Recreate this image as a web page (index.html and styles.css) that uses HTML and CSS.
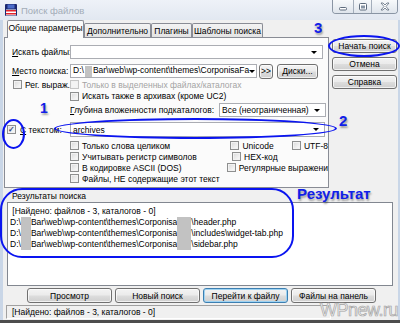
FILE: index.html
```html
<!DOCTYPE html>
<html lang="ru">
<head>
  <meta charset="UTF-8" />
  <title>Поиск файлов</title>
  <link rel="stylesheet" href="styles.css">
</head>
<body>

  <div class="window">

    <!-- TITLE BAR -->
    <div class="titlebar">
      <svg class="app-icon" width="12" height="12" viewBox="0 0 12 12">
        <rect x="0" y="0" width="12" height="12" rx="1" fill="#1b2870"/>
        <rect x="2.5" y="0.5" width="7" height="4" fill="#4a6ac8"/>
        <rect x="1" y="5.5" width="10" height="6" fill="#ffffff"/>
        <rect x="1" y="6" width="10" height="1.5" fill="#e3222b"/>
        <rect x="1" y="9" width="10" height="1.5" fill="#e3222b"/>
      </svg>
      <span class="title">Поиск файлов</span>
      <div class="controls">
        <div class="ctl ctl-min">
          <svg width="10" height="8" viewBox="0 0 10 8"><rect x="1.5" y="4.5" width="7" height="2.5" rx="1" fill="#fff" stroke="#5d6b7c"/></svg>
        </div>
        <div class="ctl ctl-max">
          <svg width="10" height="8" viewBox="0 0 10 8"><rect x="1.5" y="0.5" width="7" height="6.5" rx="1" fill="#fff" stroke="#5d6b7c"/><rect x="3" y="2.5" width="4" height="3" fill="#8794a4"/></svg>
        </div>
        <div class="ctl ctl-close">
          <svg width="12" height="9" viewBox="0 0 12 9"><path d="M2 1 L4 1 L6 3 L8 1 L10 1 L7 4.5 L10 8 L8 8 L6 6 L4 8 L2 8 L5 4.5 Z" fill="#fff" stroke="#5d6b7c" stroke-width="0.8" stroke-linejoin="round"/></svg>
        </div>
      </div>
    </div>

    <!-- CLIENT AREA -->
    <div class="client">

      <div class="top">
        <div class="tabs">
          <div class="tabstrip">
            <div class="tab active" style="width: 77px;">Общие параметры</div>
            <div class="tab" style="width: 67px;">Дополнительно</div>
            <div class="tab" style="width: 41px;">Плагины</div>
            <div class="tab" style="width: 71px;">Шаблоны поиска</div>
          </div>

          <div class="panel">
            <div class="row row-1">
              <div class="lbl"><span><u>И</u>скать файлы:</span></div>
              <div class="combo combo-files"><span class="arrow"></span></div>
            </div>

            <div class="row row-2">
              <div class="lbl"><span><u>М</u>есто поиска:</span></div>
              <div class="combo combo-place"><span>D:\<span class="redact redact-place"></span>Bar\web\wp-content\themes\CorponisaFa</span><span class="arrow"></span></div>
              <div class="btn btn-more">&gt;&gt;</div>
              <div class="btn btn-disks">Диски...</div>
            </div>

            <div class="row row-3">
              <div class="lbl lbl-check"><span class="cb"></span><span>Рег. выраж.</span></div>
              <div class="check disabled"><span class="cb"></span><span>Только в выделенных файлах/каталогах</span></div>
            </div>

            <div class="row row-4">
              <div class="lbl"></div>
              <div class="check"><span class="cb"></span><span>Искать также в архивах (кроме UC2)</span></div>
            </div>

            <div class="row row-5">
              <div class="lbl"></div>
              <div class="depth"><u>Г</u>лубина вложенности подкаталогов:</div>
              <div class="combo combo-depth"><span>Все (неограниченная)</span><span class="arrow"></span></div>
            </div>

            <div class="row row-6">
              <div class="lbl lbl-text"><span class="cb checked">&#10003;</span><span><u>С</u> текстом:</span></div>
              <div class="combo combo-text"><span>archives</span><span class="arrow"></span></div>
            </div>

            <div class="row row-opt">
              <div class="lbl"></div>
              <div class="check col-a"><span class="cb"></span><span>Только слова целиком</span></div>
              <div class="check col-b"><span class="cb"></span><span>Unicode</span></div>
              <div class="check"><span class="cb"></span><span>UTF-8</span></div>
            </div>
            <div class="row row-opt">
              <div class="lbl"></div>
              <div class="check col-a"><span class="cb"></span><span>Учитывать регистр символов</span></div>
              <div class="check col-b"><span class="cb"></span><span>HEX-код</span></div>
            </div>
            <div class="row row-opt">
              <div class="lbl"></div>
              <div class="check col-a"><span class="cb"></span><span>В кодировке ASCII (DOS)</span></div>
              <div class="check"><span class="cb"></span><span>Регулярные выражени</span></div>
            </div>
            <div class="row row-opt">
              <div class="lbl"></div>
              <div class="check"><span class="cb"></span><span>Файлы, НЕ содержащие этот текст</span></div>
            </div>
          </div>
        </div>

        <div class="side">
          <div class="btn">Начать поиск</div>
          <div class="btn">Отмена</div>
          <div class="btn">Справка</div>
        </div>
      </div>

      <div class="results-label">Результаты поиска</div>
      <div class="results-list">
        <div class="line">&nbsp;[Найдено: файлов - 3, каталогов - 0]</div>
        <div class="line">D:\<span class="redact r1"></span>Bar\web\wp-content\themes\Corponisa<span class="redact r2"></span>\header.php</div>
        <div class="line">D:\<span class="redact r1"></span>Bar\web\wp-content\themes\Corponisa<span class="redact r2"></span>\includes\widget-tab.php</div>
        <div class="line">D:\<span class="redact r1"></span>Bar\web\wp-content\themes\Corponisa<span class="redact r2"></span>\sidebar.php</div>
      </div>

      <div class="buttons">
        <div class="btn">Просмотр</div>
        <div class="btn">Новый поиск</div>
        <div class="btn focus">Перейти к файлу</div>
        <div class="btn">Файлы на панель</div>
      </div>

      <div class="status">
        <div class="status-pane">[Найдено: файлов - 3, каталогов - 0]</div>
      </div>
    </div>

    <!-- ANNOTATIONS -->
    <div class="mark e1"></div>
    <div class="mark e2"></div>
    <div class="mark e3"></div>
    <div class="mark e4"></div>
    <div class="num n1">1</div>
    <div class="num n2">2</div>
    <div class="num n3">3</div>
    <div class="num result">Результат</div>
    <div class="watermark">WPnew.ru</div>
  </div>

</body>
</html>
```

FILE: styles.css
```css
* {
  box-sizing: border-box;
}

body {
  margin: 0;
  font-family: "Liberation Sans", Arial, sans-serif;
  font-size: 8.5px;
  color: #000;
}

.window {
  position: relative;
  width: 400px;
  height: 323px;
  overflow: hidden;
  background: #c9d6e7;
  border-bottom: 3px solid #4d4d4d;
  display: flex;
  flex-direction: column;
}

/* Title bar */
.titlebar {
  height: 20px;
  flex: none;
  display: flex;
  align-items: flex-start;
  background: linear-gradient(#eef2f8, #e2e8f1);
}

.app-icon {
  margin: 4px 0 0 5px;
}

.title {
  margin: 5px 0 0 4px;
  color: #a3acb8;
  font-size: 9.5px;
}

.controls {
  margin-left: auto;
  margin-right: 2px;
  height: 14px;
  display: flex;
  border: 1px solid #8a95a4;
  border-top: none;
  border-radius: 0 0 4px 4px;
  overflow: hidden;
}

.ctl {
  display: flex;
  align-items: center;
  justify-content: center;
  background: linear-gradient(#f7f9fb, #dfe5ec);
}

.ctl + .ctl {
  border-left: 1px solid #a4aebb;
}

.ctl-min { width: 20px; }
.ctl-max { width: 18px; }
.ctl-close { width: 26px; }

/* Client */
.client {
  flex: 1;
  display: flex;
  flex-direction: column;
  margin: 0 2px 0 3px;
  background: #f0f0f0;
}

.top {
  height: 167px;
  display: flex;
}

.tabs {
  width: 325px;
  margin-left: 1px;
}

.tabstrip {
  height: 17px;
  padding-left: 3px;
  display: flex;
  align-items: flex-end;
}

.tab {
  height: 14px;
  border: 1px solid #898c95;
  border-bottom: none;
  border-radius: 2px 2px 0 0;
  background: linear-gradient(#f3f3f3, #e3e3e3);
  display: flex;
  align-items: center;
  justify-content: center;
  white-space: nowrap;
}

.tab.active {
  height: 18px;
  margin-bottom: -1px;
  background: #fbfbfb;
  position: relative;
  z-index: 1;
  padding-bottom: 3px;
}

.panel {
  height: 151px;
  border: 1px solid #898c95;
  background: #fbfbfb;
}

.row {
  display: flex;
  align-items: center;
  white-space: nowrap;
}

.lbl {
  width: 65px;
  flex: none;
  padding-left: 7px;
  display: flex;
  align-items: center;
}

.row-1 { margin-top: 7px; height: 14px; }
.row-2 { margin-top: 5px; height: 14px; }
.row-3 { margin-top: 1px; height: 11px; }
.row-4 { height: 12px; }
.row-5 { margin-top: 1px; height: 14px; }
.row-6 { margin-top: 5px; height: 15px; }
.row-opt { height: 11px; }
.row-6 + .row-opt { margin-top: 3px; }

.lbl-check { padding-left: 8px; }
.lbl-text { padding-left: 2px; }

.combo {
  height: 14px;
  background: #fff;
  border: 1px solid #abadb3;
  display: flex;
  align-items: center;
  padding-left: 2px;
  overflow: hidden;
}

.combo .arrow {
  margin-left: auto;
  margin-right: 5px;
  flex: none;
  border-left: 3px solid transparent;
  border-right: 3px solid transparent;
  border-top: 3px solid #000;
}

.combo-files { width: 253px; }
.combo-place { width: 187px; }
.combo-depth { width: 107px; margin-left: auto; margin-right: 2px; }
.combo-text { width: 255px; height: 15px; }

.btn-more { width: 14px; margin-left: 2px; }
.btn-disks { width: 41px; margin-left: 4px; }

.check {
  display: flex;
  align-items: center;
}

.check.disabled {
  color: #a3a3a3;
}

.col-a { width: 162px; }
.col-b { width: 62px; }

.cb {
  width: 9px;
  height: 9px;
  flex: none;
  margin-right: 3px;
  border: 1px solid #8e8f8f;
  background: linear-gradient(135deg, #d9d9d9, #fdfdfd);
  box-shadow: inset 0 0 0 1px #f2f2f2;
  display: flex;
  align-items: center;
  justify-content: center;
  font-size: 8px;
  font-weight: bold;
  color: #33457a;
}

.lbl-text .cb {
  margin-right: 4px;
}

.disabled .cb {
  border-color: #c6c6c6;
  background: #f4f4f4;
}

.redact {
  display: inline-block;
  height: 11px;
  background: #c2c2c2;
  vertical-align: middle;
}

.redact-place { width: 7px; margin: 0 1px; }
.r1 { width: 10px; }
.r2 { width: 14px; }

/* Buttons */
.btn {
  height: 15px;
  border: 1px solid #707070;
  border-radius: 3px;
  background: linear-gradient(#f3f3f3 0%, #ebebeb 48%, #dddddd 52%, #cfcfcf 100%);
  box-shadow: inset 0 0 0 1px rgba(255, 255, 255, 0.7);
  display: flex;
  align-items: center;
  justify-content: center;
  white-space: nowrap;
  flex: none;
}

.btn.focus {
  border-color: #3c7fb1;
  box-shadow: inset 0 0 0 1px #9fd3f2;
}

.side {
  width: 65px;
  margin-left: 3px;
  padding-top: 19px;
  display: flex;
  flex-direction: column;
  gap: 4px;
}

.side .btn {
  height: 14px;
}

/* Results */
.results-label {
  height: 15px;
  padding: 4px 0 0 9px;
  line-height: 11px;
}

.results-list {
  height: 84px;
  margin: 0 5px 0 4px;
  padding: 3px 0 0 2px;
  background: #fff;
  border: 1px solid #828790;
}

.line {
  height: 11px;
  line-height: 11px;
  white-space: nowrap;
}

.line .redact {
  vertical-align: top;
}

.buttons {
  height: 15px;
  margin-top: 2px;
  padding-left: 24px;
  display: flex;
  gap: 3px;
}

.buttons .btn {
  width: 85px;
}

.status {
  height: 14px;
  margin-top: 2px;
  padding: 0 2px 0 3px;
}

.status-pane {
  height: 14px;
  width: 325px;
  padding-left: 5px;
  line-height: 13px;
  border: 1px solid;
  border-color: #a0a0a0 #ffffff #ffffff #a0a0a0;
}

/* Annotations */
.mark {
  position: absolute;
  border: 2.5px solid #0a14f0;
  border-radius: 50%;
}

.e1 { left: 2px; top: 119px; width: 23px; height: 30px; }
.e2 { left: 54px; top: 118px; width: 283px; height: 21px; }
.e3 { left: 328px; top: 35px; width: 72px; height: 22px; }
.e4 { left: 0; top: 188px; width: 294px; height: 70px; border-radius: 22px; }

.num {
  position: absolute;
  font-family: "Liberation Sans", Arial, sans-serif;
  font-weight: bold;
  color: #1020e8;
  text-shadow: 1px 2px 2px rgba(0, 0, 0, 0.35);
  line-height: 1;
}

.n1 { left: 40px; top: 101px; font-size: 14px; }
.n2 { left: 339px; top: 113px; font-size: 15px; }
.n3 { left: 314px; top: 20px; font-size: 15px; }
.result { left: 297px; top: 186px; font-size: 15px; }

.watermark {
  position: absolute;
  left: 320px;
  top: 302px;
  font-family: "Liberation Sans", Arial, sans-serif;
  font-size: 18px;
  line-height: 17px;
  letter-spacing: -0.5px;
  color: #f4f4f4;
  -webkit-text-stroke: 0.7px #a3a3a3;
}
```
